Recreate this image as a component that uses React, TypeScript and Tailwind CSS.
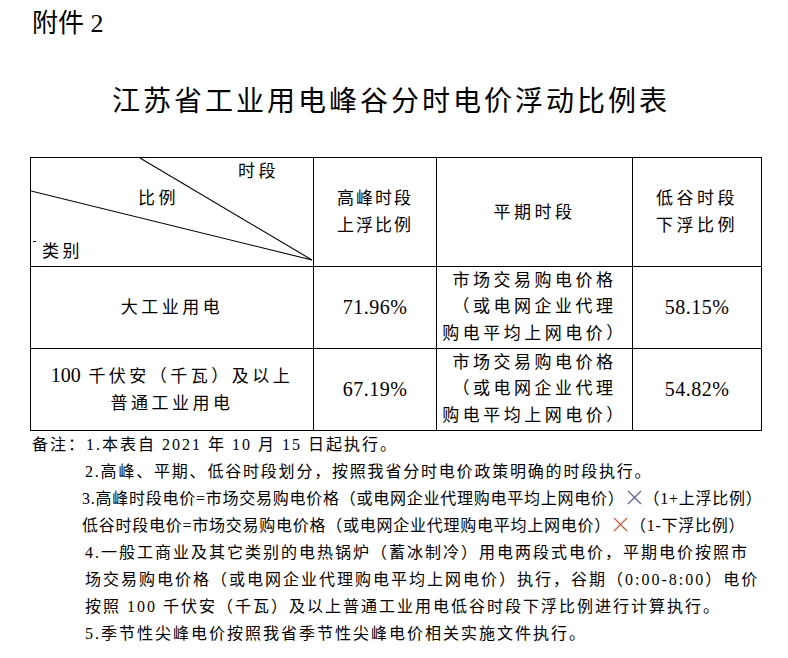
import React from "react";

const STACK = '"Liberation Serif", "Noto Sans CJK SC", sans-serif';

function Cross({ color }: { color: string }) {
  return (
    <svg width="15" height="15" viewBox="0 0 15 15" className="inline-block align-[-1px] mx-[2px]">
      <line x1="1" y1="1" x2="14" y2="14" stroke={color} strokeWidth="1.3" />
      <line x1="14" y1="1" x2="1" y2="14" stroke={color} strokeWidth="1.3" />
    </svg>
  );
}

export default function App() {
  return (
    <div
      className="w-[788px] h-[658px] bg-white text-black overflow-hidden"
      style={{ fontFamily: STACK }}
    >
      <div className="pt-[9px] pl-[32px] text-[26px] leading-[30px] whitespace-nowrap">
        附件 2
      </div>

      <div className="mt-[43px] pl-[112px] text-[28px] leading-[40px] tracking-[3px] whitespace-nowrap">
        江苏省工业用电峰谷分时电价浮动比例表
      </div>

      <div className="mt-[35px] ml-[30px] w-[732px] grid grid-cols-[283px_123px_196px_129px] grid-rows-[109px_82px_82px] border-l border-t border-black">
        {/* header diagonal cell */}
        <div className="relative border-r border-b border-black text-[17px] leading-[20px] tracking-[3.5px]">
          <svg className="absolute left-0 top-0" width="282" height="108" viewBox="0 0 282 108">
            <line x1="109" y1="0" x2="281" y2="102" stroke="#000" strokeWidth="1.1" />
            <line x1="0" y1="33" x2="281" y2="102" stroke="#000" strokeWidth="1.1" />
          </svg>
          <div className="absolute left-[2px] top-[83px] w-[3px] h-px bg-black" />
          <span className="absolute left-[207px] top-[4px] whitespace-nowrap">时段</span>
          <span className="absolute left-[107px] top-[31px] whitespace-nowrap">比例</span>
          <span className="absolute left-[11px] top-[84px] whitespace-nowrap">类别</span>
        </div>
        <div className="flex items-center justify-center text-center border-r border-b border-black text-[17px] leading-[27px] tracking-[2px]">
          <div>高峰时段<br />上浮比例</div>
        </div>
        <div className="flex items-center justify-center text-center border-r border-b border-black text-[17px] leading-[27px] tracking-[3.5px]">
          <div>平期时段</div>
        </div>
        <div className="flex items-center justify-center text-center border-r border-b border-black text-[17px] leading-[27px] tracking-[3.5px]">
          <div>低谷时段<br />下浮比例</div>
        </div>

        {/* row 1 */}
        <div className="flex items-center justify-center text-center border-r border-b border-black text-[17px] leading-[27px] tracking-[3.5px]">
          <div>大工业用电</div>
        </div>
        <div className="flex items-center justify-center border-r border-b border-black text-[20px] leading-[27px] tracking-[0.5px]">
          71.96%
        </div>
        <div className="flex items-center justify-center text-center border-r border-b border-black text-[17px] leading-[26.5px] tracking-[3.5px]">
          <div className="whitespace-nowrap">市场交易购电价格<br />（或电网企业代理<br />购电平均上网电价）</div>
        </div>
        <div className="flex items-center justify-center border-r border-b border-black text-[20px] leading-[27px] tracking-[0.5px]">
          58.15%
        </div>

        {/* row 2 */}
        <div className="flex items-center justify-center text-center border-r border-b border-black text-[17px] leading-[26.5px] tracking-[3.5px]">
          <div className="whitespace-nowrap">
            <span className="text-[20px] tracking-[0px]">100</span> 千伏安（千瓦）及以上<br />普通工业用电
          </div>
        </div>
        <div className="flex items-center justify-center border-r border-b border-black text-[20px] leading-[27px] tracking-[0.5px]">
          67.19%
        </div>
        <div className="flex items-center justify-center text-center border-r border-b border-black text-[17px] leading-[26.5px] tracking-[3.5px]">
          <div className="whitespace-nowrap">市场交易购电价格<br />（或电网企业代理<br />购电平均上网电价）</div>
        </div>
        <div className="flex items-center justify-center border-r border-b border-black text-[20px] leading-[27px] tracking-[0.5px]">
          54.82%
        </div>
      </div>

      <div className="text-[16px] leading-[27px] whitespace-nowrap">
        <div className="pl-[32px] tracking-[2px]">备注：1.本表自 2021 年 10 月 15 日起执行。</div>
        <div className="pl-[85px] tracking-[1.8px]">2.高峰、平期、低谷时段划分，按照我省分时电价政策明确的时段执行。</div>
        <div className="pl-[82px] tracking-[0.75px]">
          3.高峰时段电价=市场交易购电价格（或电网企业代理购电平均上网电价）<Cross color="#5c5ca6" />（1+上浮比例）
        </div>
        <div className="pl-[82px] tracking-[0.75px]">
          低谷时段电价=市场交易购电价格（或电网企业代理购电平均上网电价）<Cross color="#c8603c" />（1-下浮比例）
        </div>
        <div className="pl-[85px] tracking-[2px]">4.一般工商业及其它类别的电热锅炉（蓄冰制冷）用电两段式电价，平期电价按照市</div>
        <div className="pl-[85px] tracking-[2px]">场交易购电价格（或电网企业代理购电平均上网电价）执行，谷期（0:00-8:00）电价</div>
        <div className="pl-[85px] tracking-[2px]">按照 100 千伏安（千瓦）及以上普通工业用电低谷时段下浮比例进行计算执行。</div>
        <div className="pl-[85px] tracking-[2px]">5.季节性尖峰电价按照我省季节性尖峰电价相关实施文件执行。</div>
      </div>
    </div>
  );
}
